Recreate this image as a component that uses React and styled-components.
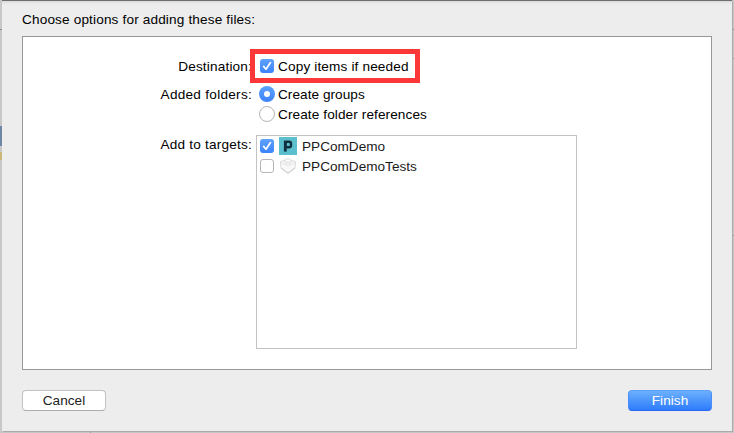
import React from "react";
import styled, { createGlobalStyle, css } from "styled-components";

const GlobalStyle = createGlobalStyle`
  * { box-sizing: border-box; }
  body {
    margin: 0;
    overflow: hidden;
    font-family: "Liberation Sans", Arial, sans-serif;
    font-size: 13.6px;
    line-height: 20px;
    color: #000;
  }
`;

const Desk = styled.div`
  width: 734px;
  height: 433px;
  padding: 0 2px 2px;
  background:
    linear-gradient(#8f8f8f, #8f8f8f) 0 29px / 2px 1px no-repeat,
    linear-gradient(#6f87a5, #6f87a5) 0 126px / 2px 20px no-repeat,
    linear-gradient(#c9b878, #c9b878) 0 152px / 2px 8px no-repeat,
    linear-gradient(#8f8f8f, #8f8f8f) 732px 29px / 2px 1px no-repeat,
    linear-gradient(#999, #999) 732px 58px / 2px 1px no-repeat,
    linear-gradient(#999, #999) 732px 235px / 2px 1px no-repeat,
    linear-gradient(#999, #999) 90px 431px / 1px 2px no-repeat,
    #c8c8c8;
`;

const Sheet = styled.main`
  height: 431px;
  padding: 10px 20px 0;
  display: flex;
  flex-direction: column;
  background: linear-gradient(#706d70 0, #706d70 1px, #d5d4d5 1px, #e3e3e3 2px, #ededed 5px);
  box-shadow: 0 0 1px 0.5px #aaa;
`;

const Heading = styled.h1`
  margin: 0 0 6px;
  height: 20px;
  font: inherit;
  letter-spacing: 0.15px;
`;

const Options = styled.section`
  height: 334px;
  padding-top: 19px;
  border: 1px solid #979797;
  background: #fff;
`;

const Row = styled.div`
  display: grid;
  grid-template-columns: 229px 1fr;
  column-gap: 4px;
  height: ${(p) => p.$height}px;
`;

const Label = styled.div`
  padding-top: 1px;
  text-align: right;
  white-space: nowrap;
  letter-spacing: ${(p) => p.$spacing}px;
`;

const Choice = styled.label`
  display: flex;
  align-items: center;
  height: 20px;
  padding-left: 4px;
  white-space: nowrap;
`;

const Highlight = styled.div`
  width: 170px;
  height: 34px;
  margin: -7px 0 0 -6px;
  padding: 2px 0 0 1px;
  border: 5px solid #fc3738;
  z-index: 1;
`;

const checkedFill = css`
  border: 0;
  background: linear-gradient(#5da2fb, #3d83fb);
`;

const Check = styled.span`
  display: flex;
  flex: none;
  width: 14px;
  height: 14px;
  border: 1px solid #b6b6b6;
  border-radius: 3px;
  background: #fff;
  ${(p) => p.$on && checkedFill}
`;

const Radio = styled.span`
  display: flex;
  flex: none;
  align-items: center;
  justify-content: center;
  width: 16px;
  height: 16px;
  margin: 0 -1px;
  border: 1px solid #b6b6b6;
  border-radius: 50%;
  background: #fff;
  ${(p) => p.$on && checkedFill}
`;

const RadioDot = styled.span`
  width: 6px;
  height: 6px;
  border-radius: 50%;
  background: #fff;
`;

const Text = styled.span`
  padding-top: 1px;
  margin-left: 4px;
  letter-spacing: ${(p) => p.$spacing || 0}px;
`;

const TargetList = styled.div`
  width: 321px;
  height: 214px;
  margin-top: 1px;
  border: 1px solid #c3c3c3;
`;

const TargetRow = styled(Choice)`
  padding-left: 3px;

  & > svg { margin-left: 5px; flex: none; }
  & > ${Text} { margin-left: 5px; color: #1b1b1b; }
`;

const Actions = styled.footer`
  display: flex;
  justify-content: space-between;
  margin-top: 20px;
`;

const Button = styled.button`
  width: 84px;
  height: 21px;
  padding: 0;
  border: 1px solid #c2c2c2;
  border-bottom-color: #adadad;
  border-radius: 4px;
  background: #fff;
  color: #222;
  font: inherit;
  line-height: 19px;
  letter-spacing: 0.05px;

  ${(p) => p.$primary && css`
    border-color: #5c9ffb #4b8efb #2d66f8;
    background: linear-gradient(#6cb0fb, #2e7cfd);
    color: #fff;
  `}
`;

function Checkbox({ on }) {
  return (
    <Check $on={on}>
      {on && (
        <svg width="14" height="14" viewBox="0 0 14 14" fill="none">
          <path d="M3.6 7.4 6 10.2 10.5 3.6" stroke="#fff" strokeWidth="1.7" strokeLinecap="round" strokeLinejoin="round" />
        </svg>
      )}
    </Check>
  );
}

function AppIcon() {
  return (
    <svg width="18" height="18" viewBox="0 0 18 18">
      <rect width="18" height="18" fill="#5bbfcd" />
      <path d="M6.3 3.6v11" stroke="#10303f" strokeWidth="2.8" />
      <rect x="6.4" y="4.8" width="5.6" height="5.4" rx="2" fill="none" stroke="#10303f" strokeWidth="2.4" />
    </svg>
  );
}

function BrickIcon() {
  return (
    <svg width="18" height="18" viewBox="0 0 18 18" strokeLinejoin="round">
      <path d="M1.4 4.8 5 3.4 9 1.6l4 1.8 3.6 1.4-.7 6.4L9 16.5l-6.9-5.3z" fill="#f9f9f9" stroke="#d4d4d4" strokeWidth=".9" />
      <path d="M2.2 5.6 9 9.2l6.8-3.6" fill="none" stroke="#e2e2e2" strokeWidth=".9" />
      <path d="M2.2 11 9 16.2 15.8 11" fill="none" stroke="#c6c6c6" strokeWidth=".9" />
      <path d="M6 3.4v2.2c0 1.6 6 1.6 6 0V3.4" fill="#f3f3f3" stroke="#d6d6d6" strokeWidth=".7" />
      <ellipse cx="9" cy="3.3" rx="3" ry="1.4" fill="#fff" stroke="#dcdcdc" strokeWidth=".7" />
    </svg>
  );
}

export default function App() {
  return (
    <>
      <GlobalStyle />
      <Desk>
        <Sheet>
          <Heading>Choose options for adding these files:</Heading>
          <Options>
            <Row $height={28}>
              <Label $spacing={0.17}>Destination:</Label>
              <Highlight>
                <Choice>
                  <Checkbox on />
                  <Text $spacing={0.15}>Copy items if needed</Text>
                </Choice>
              </Highlight>
            </Row>
            <Row $height={50}>
              <Label $spacing={0.27}>Added folders:</Label>
              <div>
                <Choice>
                  <Radio $on><RadioDot /></Radio>
                  <Text $spacing={0.05}>Create groups</Text>
                </Choice>
                <Choice>
                  <Radio />
                  <Text $spacing={0.1}>Create folder references</Text>
                </Choice>
              </div>
            </Row>
            <Row $height={214}>
              <Label $spacing={0.2}>Add to targets:</Label>
              <TargetList>
                <TargetRow>
                  <Checkbox on />
                  <AppIcon />
                  <Text>PPComDemo</Text>
                </TargetRow>
                <TargetRow>
                  <Checkbox />
                  <BrickIcon />
                  <Text>PPComDemoTests</Text>
                </TargetRow>
              </TargetList>
            </Row>
          </Options>
          <Actions>
            <Button>Cancel</Button>
            <Button $primary>Finish</Button>
          </Actions>
        </Sheet>
      </Desk>
    </>
  );
}
